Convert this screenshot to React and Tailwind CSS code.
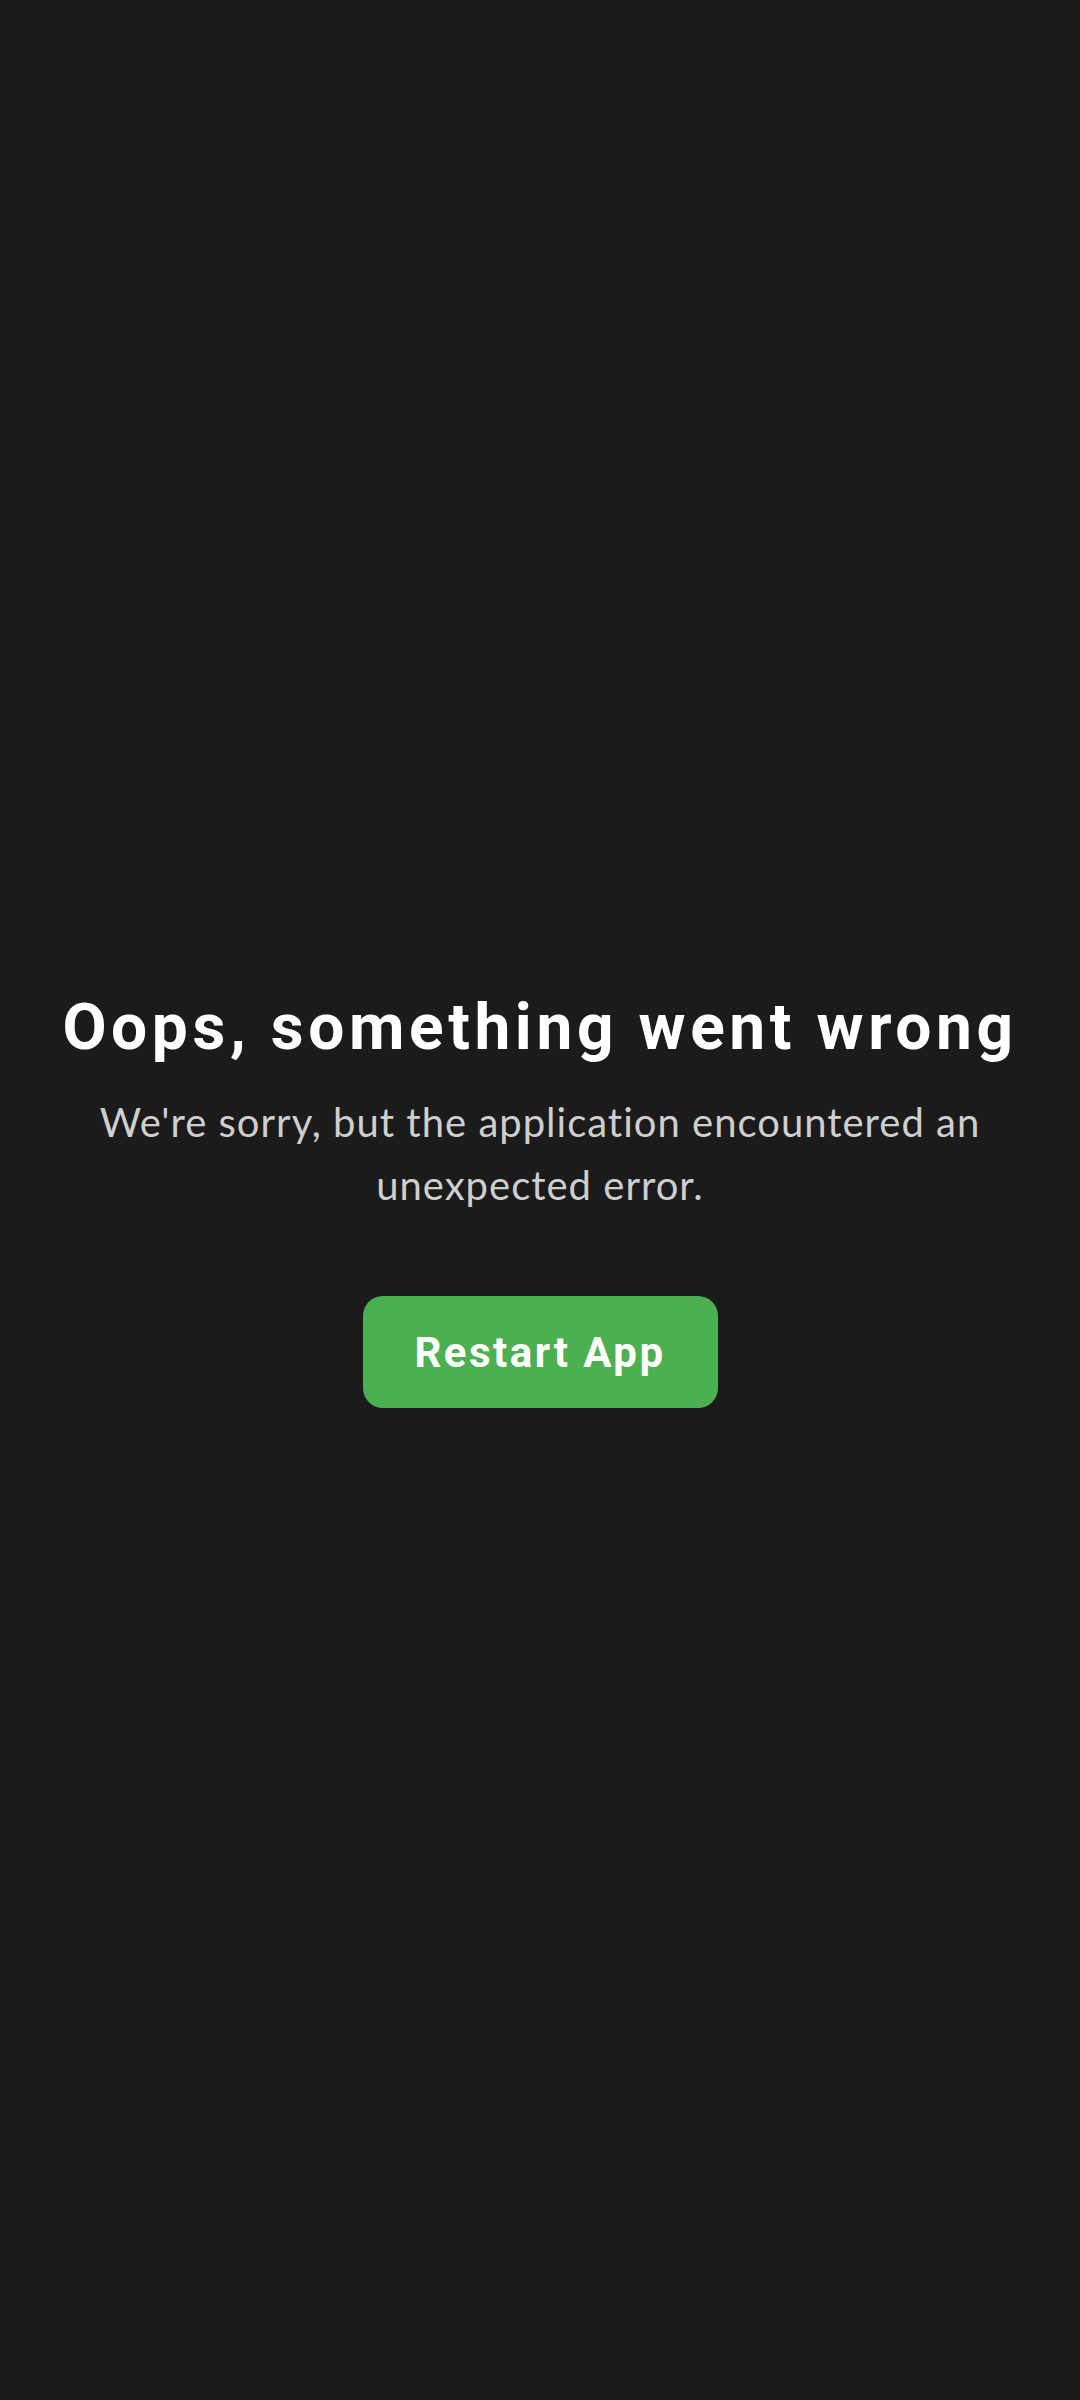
import React from 'react';

const App = () => {
  return (
    <div className="min-h-[2400px] w-full bg-[#1b1b1b] flex flex-col items-center pt-[990px] px-12">
      <h1 className="font-[Roboto,sans-serif] text-[64px] leading-[76px] font-bold tracking-[4.6px] text-white text-center whitespace-nowrap">
        Oops, something went wrong
      </h1>
      <p className="mt-[25px] font-[Lato,sans-serif] text-[40px] leading-[63px] tracking-[1px] text-[#cfcfcf] text-center max-w-[920px]">
        We're sorry, but the application encountered an unexpected error.
      </p>
      <button className="mt-[79px] w-[355px] h-[112px] rounded-[20px] bg-[#4caf50] font-[Roboto,sans-serif] text-white text-[42px] font-bold tracking-[2.5px]">
        Restart App
      </button>
    </div>
  );
};

export default App;
